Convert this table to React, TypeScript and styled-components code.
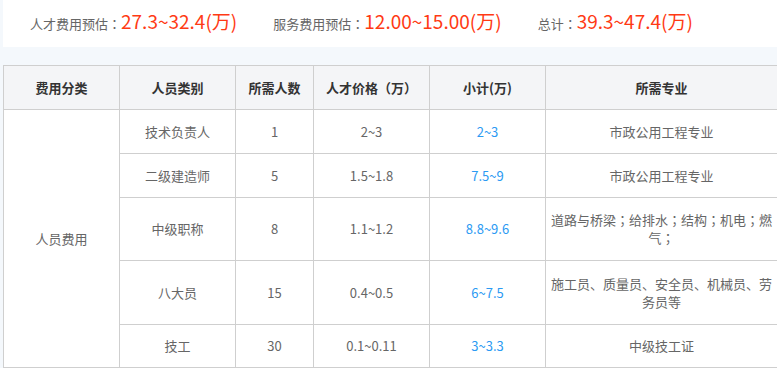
import React from "react";
import styled, { createGlobalStyle } from "styled-components";

const Global = createGlobalStyle`
  html, body { margin: 0; padding: 0; background: #f4f8fc; }
  body { font-family: "Noto Sans CJK SC", "Noto Sans", sans-serif; }
`;

const Page = styled.div`
  width: 777px;
  padding-left: 3px;
  box-sizing: border-box;
  display: flex;
  flex-direction: column;
  gap: 18px;
`;

const Summary = styled.div`
  background: #fff;
  height: 47px;
  display: flex;
  align-items: center;
  padding: 0 0 6px 27px;
  box-sizing: border-box;
  gap: 36px;
`;

const Item = styled.div`
  display: flex;
  align-items: baseline;
`;

const Label = styled.span`
  font-size: 13px;
  color: #666;
`;

const Punct = styled.span`
  font-family: "Noto Sans CJK TC", "Noto Sans CJK SC", sans-serif;
`;

const Value = styled.span`
  font-size: 19px;
  color: #ff3a14;
`;

const Table = styled.table`
  border-collapse: collapse;
  table-layout: fixed;
  width: 774px;
  background: #fff;
  font-size: 13px;
`;

const Th = styled.th`
  background: #f4f5f7;
  color: #333;
  font-weight: bold;
  border: 1px solid #cfcfcf;
  height: 43px;
  padding: 0;
  text-align: center;
`;

const Tr = styled.tr<{ $h: number }>`
  height: ${(p) => p.$h}px;
`;

const Td = styled.td<{ $blue?: boolean }>`
  border: 1px solid #cfcfcf;
  color: ${(p) => (p.$blue ? "#2b9af3" : "#666")};
  text-align: center;
  vertical-align: middle;
  padding: 0 4px;
  line-height: 18px;
`;

const withPunct = (s: string) =>
  s.split(/([：；])/).map((part, i) =>
    part === "：" || part === "；" ? <Punct key={i}>{part}</Punct> : part
  );

const rows = [
  { role: "技术负责人", n: "1", price: "2~3", sub: "2~3", major: "市政公用工程专业", h: 44 },
  { role: "二级建造师", n: "5", price: "1.5~1.8", sub: "7.5~9", major: "市政公用工程专业", h: 44 },
  { role: "中级职称", n: "8", price: "1.1~1.2", sub: "8.8~9.6", major: "道路与桥梁；给排水；结构；机电；燃气；", h: 63 },
  { role: "八大员", n: "15", price: "0.4~0.5", sub: "6~7.5", major: "施工员、质量员、安全员、机械员、劳务员等", h: 64 },
  { role: "技工", n: "30", price: "0.1~0.11", sub: "3~3.3", major: "中级技工证", h: 43 },
];

const summary = [
  { label: "人才费用预估：", value: "27.3~32.4(万)" },
  { label: "服务费用预估：", value: "12.00~15.00(万)" },
  { label: "总计：", value: "39.3~47.4(万)" },
];

export default function App() {
  return (
    <>
      <Global />
      <Page>
        <Summary>
          {summary.map((s) => (
            <Item key={s.label}>
              <Label>{withPunct(s.label)}</Label>
              <Value>{s.value}</Value>
            </Item>
          ))}
        </Summary>
        <Table>
          <colgroup>
            <col style={{ width: 116 }} />
            <col style={{ width: 116 }} />
            <col style={{ width: 78 }} />
            <col style={{ width: 116 }} />
            <col style={{ width: 116 }} />
            <col style={{ width: 232 }} />
          </colgroup>
          <thead>
            <tr>
              <Th>费用分类</Th>
              <Th>人员类别</Th>
              <Th>所需人数</Th>
              <Th>人才价格（万）</Th>
              <Th>小计(万)</Th>
              <Th>所需专业</Th>
            </tr>
          </thead>
          <tbody>
            {rows.map((r, i) => (
              <Tr key={r.role} $h={r.h}>
                {i === 0 && <Td rowSpan={5}>人员费用</Td>}
                <Td>{r.role}</Td>
                <Td>{r.n}</Td>
                <Td>{r.price}</Td>
                <Td $blue>{r.sub}</Td>
                <Td>{withPunct(r.major)}</Td>
              </Tr>
            ))}
          </tbody>
        </Table>
      </Page>
    </>
  );
}
